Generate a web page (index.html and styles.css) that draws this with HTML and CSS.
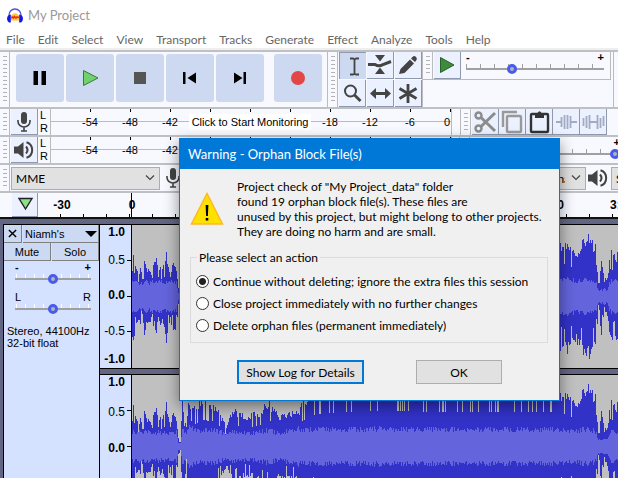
FILE: index.html
```html
<!DOCTYPE html>
<html lang="en">
<head>
<meta charset="utf-8">
<title>My Project</title>
<link rel="stylesheet" href="styles.css">
</head>
<body>
<svg class="defs" aria-hidden="true">
  <symbol id="mic" viewBox="0 0 16 20">
    <rect x="5" y="0" width="6" height="12" rx="3" fill="#444"/>
    <path d="M2 8v1.500a6 5.500 0 0 0 12 0V8M8 15v4M5 19h6" fill="none" stroke="#444" stroke-width="1.600"/>
  </symbol>
  <symbol id="speaker" viewBox="0 0 20 20">
    <path d="M0 6.500h4L9.500 2v16L4 13.500H0z" fill="#444"/>
    <path d="M12 6.500q3 3.500 0 7" fill="none" stroke="#444" stroke-width="2"/>
    <path d="M12.500 2.200a8.200 8.200 0 0 1 0 15.600" fill="none" stroke="#444" stroke-width="2"/>
  </symbol>
</svg>

<div class="app">
  <header class="titlebar">
    <svg class="logo" viewBox="0 0 16 15" aria-hidden="true">
      <path d="M2 9V7a6 6 0 0 1 12 0v2" fill="none" stroke="#5050dc" stroke-width="1.300"/>
      <path d="M4 7.500q4-4.500 8 0v5H4z" fill="#ffc83c"/>
      <path d="M4 10l1.500-1 1 1 1-1.500 1.500 1.500 1-1 2 .5" fill="none" stroke="#f03214" stroke-width="1.600"/>
      <path d="M3.800 6.500v8H2Q0 13 0 10.500T2 7zM12.200 6.500v8H14q2-1.500 2-4T14 7z" fill="#1414e6"/>
    </svg>
    <span>My Project</span>
  </header>
  <nav class="menubar">
    <a href="#">File</a><a href="#">Edit</a><a href="#">Select</a><a href="#">View</a><a href="#">Transport</a><a href="#">Tracks</a><a href="#">Generate</a><a href="#">Effect</a><a href="#">Analyze</a><a href="#">Tools</a><a href="#">Help</a>
  </nav>

  <div class="row row-main">
    <section class="bar transport" aria-label="Transport">
      <i class="grip"></i>
      <div class="big-buttons">
        <button aria-label="Pause"><svg viewBox="0 0 48 48"><path d="M17.500 17h4.500v14h-4.500zM25.500 17H30v14h-4.500z"/></svg></button>
        <button aria-label="Play"><svg viewBox="0 0 48 48"><path d="M17.500 16.500v15L32 24z" fill="#6fd26b" stroke="#3c7a3c"/></svg></button>
        <button aria-label="Stop"><svg viewBox="0 0 48 48"><path d="M18 18h12v12H18z" fill="#555"/></svg></button>
        <button aria-label="Skip to start"><svg viewBox="0 0 48 48"><path d="M17 18h2.500v12H17zM30 18.500v11L21.500 24z"/></svg></button>
        <button aria-label="Skip to end"><svg viewBox="0 0 48 48"><path d="M27.500 18H30v12h-2.500zM18 18.500v11l8.500-5.500z"/></svg></button>
        <button class="record" aria-label="Record"><svg viewBox="0 0 48 48"><circle cx="24" cy="24" r="7" fill="#e34646"/></svg></button>
      </div>
    </section>
    <section class="bar tools" aria-label="Tools">
      <i class="grip"></i>
      <div class="tool-grid">
        <button class="tool pressed" aria-label="Selection"><svg viewBox="0 0 26 26"><path d="M10 5.500h3L14.500 6.500l1.500-1h3M10 21.500h3l1.500-1 1.500 1h3M14.500 6v15" fill="none" stroke="#444" stroke-width="1.800"/></svg></button>
        <button class="tool" aria-label="Envelope"><svg viewBox="0 0 26 26"><path d="M8 3h10l-5 6.500zM13 15.500l5 6.500H8z" fill="#444"/><path d="M1 12.500h7q4 2.500 8 0l8-3" fill="none" stroke="#444" stroke-width="3"/></svg></button>
        <button class="tool" aria-label="Draw"><svg viewBox="0 0 26 26"><path d="M4 22l1.500-5L15 7.500l4 4L9.500 21zM16 6.500l2-2q1.500-1 3 .5t.5 3L20 10z" fill="#444"/></svg></button>
        <button class="tool" aria-label="Zoom"><svg viewBox="0 0 26 26"><circle cx="11.500" cy="11" r="5.500" fill="none" stroke="#444" stroke-width="2"/><path d="M15.500 15l6 6" stroke="#444" stroke-width="2.800"/></svg></button>
        <button class="tool" aria-label="Time shift"><svg viewBox="0 0 26 26"><path d="M3 13.500l6-5.500v4h9V8l6 5.500-6 5.500v-4H9v4z" fill="#444"/></svg></button>
        <button class="tool" aria-label="Multi-tool"><svg viewBox="0 0 26 26"><path d="M13 4v19M4.500 8.500l17 10M4.500 18.500l17-10" stroke="#444" stroke-width="2.800"/></svg></button>
      </div>
    </section>
    <section class="bar speed" aria-label="Play at speed">
      <i class="grip"></i>
      <button class="tool" aria-label="Play at speed"><svg viewBox="0 0 26 26"><path d="M6.500 5.500v15L20 13z" fill="#3c8c3c" stroke="#2d5f2d"/></svg></button>
      <div class="slider speed-slider"><div class="ends"><b>-</b><b>+</b></div><input type="range" aria-label="Speed" min="0" max="100" value="32"></div>
    </section>
    <div class="bar-end"></div>
  </div>

  <div class="row">
    <section class="bar meter-bar" aria-label="Recording meter">
      <i class="grip"></i>
      <button class="tool" aria-label="Record meter"><svg class="mic"><use href="#mic"/></svg></button>
      <div class="lr"><span>L</span><span>R</span></div>
      <div class="meter"><span>-54</span><span>-48</span><span>-42</span><button class="monitor">Click to Start Monitoring</button><span>-18</span><span>-12</span><span>-6</span><span class="zero">0</span></div>
    </section>
    <section class="bar edit" aria-label="Edit">
      <i class="grip"></i>
      <button class="tool" aria-label="Cut"><svg viewBox="0 0 26 26" fill="none" stroke="#8c8c8c" stroke-width="2.400"><circle cx="6.500" cy="6.500" r="3"/><circle cx="6.500" cy="19.500" r="3"/><path d="M9 8.500L23 22M9 17.500L23 4" stroke-width="3"/></svg></button>
      <button class="tool" aria-label="Copy"><svg viewBox="0 0 26 26" fill="none" stroke="#999" stroke-width="2.400"><path d="M4 18V3h14"/><rect x="8" y="7" width="14" height="16" rx="1"/></svg></button>
      <button class="tool" aria-label="Paste"><svg viewBox="0 0 26 26"><rect x="5" y="5" width="17" height="18" rx="1" fill="none" stroke="#333" stroke-width="2.400"/><path d="M9 4h2.500q2-3.500 4 0H18v5H9z" fill="#333"/></svg></button>
      <button class="tool" aria-label="Trim"><svg viewBox="0 0 26 26" fill="none" stroke="#a3aac4"><path d="M3 13h5M18 13h6" stroke-width="2"/><path d="M8.500 8v10M11.500 6v14M14.500 6v14M17.500 7v12" stroke-width="1.800"/></svg></button>
      <button class="tool" aria-label="Silence"><svg viewBox="0 0 26 26" fill="none" stroke="#a3aac4"><path d="M10 13h7" stroke-width="2"/><path d="M3.500 9v8M6.500 7v12M9.500 6v14M17.500 6v14M20.500 9v10M23.500 7v10" stroke-width="1.800"/></svg></button>
    </section>
  </div>

  <div class="row">
    <section class="bar meter-bar" aria-label="Playback meter">
      <i class="grip"></i>
      <button class="tool" aria-label="Playback meter"><svg class="speaker"><use href="#speaker"/></svg></button>
      <div class="lr"><span>L</span><span>R</span></div>
      <div class="meter"><span>-54</span><span>-48</span><span>-42</span></div>
    </section>
    <section class="bar mixer" aria-label="Mixer">
      <i class="grip"></i>
      <div class="slider mixer-slider"><div class="ends"><b>-</b><b>+</b></div><input type="range" aria-label="Playback volume" value="100"></div>
    </section>
  </div>

  <div class="row">
    <section class="bar device" aria-label="Device">
      <i class="grip"></i>
      <select class="host" aria-label="Audio host"><option>MME</option></select>
      <svg class="mic"><use href="#mic"/></svg>
      <select class="rec-device" aria-label="Recording device"><option>Microphone</option></select>
      <select class="channels" aria-label="Recording channels"><option>1 (Mono) Chana</option></select>
      <svg class="speaker"><use href="#speaker"/></svg>
      <select class="play-device" aria-label="Playback device"><option>Speakers</option></select>
    </section>
  </div>

  <div class="timeline">
    <button class="tool pin" aria-label="Pinned play head"><svg viewBox="0 0 26 26"><path d="M7 6.500h13L13.500 17z" fill="#8ce08c" stroke="#222" stroke-width="1.400"/></svg></button>
    <div class="scale"><span>-30</span><span>0</span><span class="far">3:00</span><span>3:30</span></div>
  </div>

  <main class="tracks">
    <article class="track">
      <div class="panel">
        <div class="pair name"><button class="close" aria-label="Close track"><svg viewBox="0 0 10 10"><path d="M1 1l8 8M9 1L1 9" stroke="#000" stroke-width="1.600"/></svg></button><button class="label">Niamh's<i class="caret"></i></button></div>
        <div class="pair"><button>Mute</button><button>Solo</button></div>
        <div class="slider"><div class="ends"><b>-</b><b>+</b></div><input type="range" aria-label="Gain"></div>
        <div class="slider"><div class="ends"><span>L</span><span>R</span></div><input type="range" aria-label="Pan"></div>
        <p>Stereo, 44100Hz<br>32-bit float</p>
      </div>
      <div class="channels-area">
        <div class="channel">
          <div class="vruler"><b>1.0</b><span>0.5</span><b>0.0</b><span>-0.5</span><b>-1.0</b></div>
          <svg class="wave" data-channel="0" role="img" aria-label="Left channel"></svg>
        </div>
        <div class="channel">
          <div class="vruler"><b>1.0</b><span>0.5</span><b>0.0</b><i></i><i></i></div>
          <svg class="wave" data-channel="1" role="img" aria-label="Right channel"></svg>
        </div>
      </div>
    </article>
  </main>
</div>

<div class="dialog" role="dialog" aria-labelledby="dlg-title">
  <h1 id="dlg-title">Warning - Orphan Block File(s)</h1>
  <form class="dialog-body">
    <div class="message">
      <svg viewBox="0 0 34 34" aria-hidden="true"><path d="M17 1.500L32.500 32h-31z" fill="#ffe100" stroke="#fdb827" stroke-width="1.500"/><path d="M15.600 13h2.800l-.5 11h-1.800zM15.700 26h2.600v2.500h-2.600z"/></svg>
      <p>Project check of "My Project_data" folder<br>found 19 orphan block file(s). These files are<br>unused by this project, but might belong to other projects.<br>They are doing no harm and are small.</p>
    </div>
    <fieldset>
      <legend>Please select an action</legend>
      <label><input type="radio" name="action" checked>Continue without deleting; ignore the extra files this session</label>
      <label><input type="radio" name="action">Close project immediately with no further changes</label>
      <label><input type="radio" name="action">Delete orphan files (permanent immediately)</label>
    </fieldset>
    <div class="actions">
      <button type="button" class="default">Show Log for Details</button>
      <button type="button" class="ok">OK</button>
    </div>
  </form>
</div>
<script src="wave.js"></script>
</body>
</html>
```
FILE: styles.css
```css
* { box-sizing: border-box; }
html, body { margin: 0; height: 100%; overflow: hidden; }
body { font: 12px/15px Lato, "Open Sans", sans-serif; color: #000; background: #fff; }
button, select, input { font: inherit; color: inherit; margin: 0; padding: 0; border: 0; border-radius: 0; background: none; }
button svg, .logo { display: block; }
.defs { position: absolute; width: 0; height: 0; }

.app { display: flex; flex-direction: column; height: 100vh; min-width: 0; overflow: hidden; }
.titlebar { display: flex; align-items: center; gap: 5px; height: 30px; padding-left: 7px; color: #999; font-size: 13px; flex: none; }
.logo { width: 16px; height: 15px; }
.menubar { display: flex; gap: 13px; height: 20px; padding: 2px 0 0 6px; border-bottom: 2px solid #efefef; flex: none; }
.menubar a { color: #666; text-decoration: none; }

.row { display: flex; flex: none; height: 28px; background: #f7f9ff; border-top: 2px solid #bfc0c4; overflow: hidden; }
.row-main { height: 57px; }
.bar { display: flex; align-items: flex-start; flex: none; }
.grip { flex: none; align-self: stretch; width: 10px; border-right: 1px solid #bbb;
  background: repeating-linear-gradient(#b4b4b4 0 1px, transparent 1px 4px) 3px 4px / 4px calc(100% - 8px) no-repeat; }
.transport, .tools, .meter-bar { border-right: 1px solid #bbb; }
.transport { width: 328px; }
.big-buttons { display: flex; gap: 2px; padding: 2px 0 0 6px; }
.big-buttons button { width: 48px; height: 48px; border-radius: 3px; background: #ccd9f0; }
.big-buttons .record { margin-left: 8px; }
.tools { width: 95px; }
.tool-grid { display: grid; grid-template-columns: repeat(3, 27px); gap: 1px; padding-left: 1px; }
.tool { flex: none; width: 27px; height: 27px; background: #ebf1ff; border: solid #8e98ae; border-width: 0 1px 1px 0; display: flex; align-items: center; justify-content: center; }
.tool > svg { flex: none; width: 26px; height: 26px; }
.pressed { background: #ccd9f0; border-width: 1px 0 0 1px; }
.speed { height: 28px; width: 188px; border: solid #bbb; border-width: 0 1px 1px 0; }
.speed .tool { margin-left: 1px; }
.bar-end { width: 3px; border-right: 1px solid #bbb; }

.slider { display: flex; flex-direction: column; }
.slider .ends { display: flex; justify-content: space-between; font: 11px/10px "Liberation Sans", sans-serif; }
input[type=range] { appearance: none; width: 100%; height: 12px;
  background: linear-gradient(#a0a0a0, #a0a0a0) 0 6px / 100% 2px no-repeat,
    repeating-linear-gradient(90deg, #a0a0a0 0 1px, transparent 1px 14px) 0 2px / 100% 4px no-repeat; }
input[type=range]::-webkit-slider-thumb { appearance: none; width: 10px; height: 10px; margin-top: 1px; border: 3px solid #4a5aeb; border-radius: 50%; background: #b0b4c0; }
.speed-slider { width: 138px; margin-left: 5px; }
.mixer-slider { width: 146px; margin-left: 4px; }

.row .meter-bar { width: 452px; }
.row:not(.row-main) .tool { height: 26px; }
.row .meter-bar .tool { margin-left: 1px; }
.row .mic, .device > .mic { width: 16px; height: 20px; }
.row .speaker, .device > .speaker { width: 20px; height: 20px; }
.lr { display: flex; flex-direction: column; padding-left: 2px; width: 12px; font: 11px/13px "Liberation Sans", sans-serif; }
.meter { display: grid; grid-template-columns: 40px 40px 40px 120px 40px 40px 40px 20px; align-items: center; justify-items: center; height: 26px; flex: 1; padding-left: 19px; border-left: 1px solid #bbb; font: 11px/16px "Liberation Sans", sans-serif;
  background: linear-gradient(#bbb, #bbb) 0 12px / 100% 1px no-repeat,
    repeating-linear-gradient(90deg, #000 0 1px, transparent 1px 40px) 39px 0 / 100% 3px no-repeat; }
.meter .zero { justify-self: end; }
.monitor { background: #fff; padding: 0 3px; white-space: nowrap; }
.edit { margin-left: 8px; border-left: 1px solid #bbb; }
.edit .grip { margin-right: 1px; }
.mixer { border-left: 1px solid #bbb; margin-left: 7px; }

.device { align-items: center; height: 26px; }
select { appearance: none; height: 23px; border: 1px solid #adadad; padding: 0 20px 0 4px; font-size: 12px;
  background: #e1e1e1 url("data:image/svg+xml,%3Csvg xmlns='http://www.w3.org/2000/svg' width='10' height='6'%3E%3Cpath d='M1 .5l4 4 4-4' fill='none' stroke='%23444' stroke-width='1.2'/%3E%3C/svg%3E") right 4px center no-repeat; }
.host { width: 149px; margin: 0 5px 0 1px; }
.rec-device { width: 300px; margin-left: 10px; }
.channels { width: 90px; margin: 0 2px 0 5px; padding-left: 2px; }
.play-device { width: 150px; margin-left: 3px; }

.timeline { display: flex; flex: none; height: 28px; background: #f7f9ff; border-top: 2px solid #bfc0c4; border-bottom: 2px solid #111; overflow: hidden; }
.pin { margin-left: 12px; height: 24px; width: 26px; }
.scale { display: grid; grid-template-columns: 70px 70px 1fr 70px 70px; flex: 1 0 630px; align-items: center; justify-items: center; margin-left: -11px; font: bold 12px/20px "Liberation Sans", sans-serif;
  background: repeating-linear-gradient(90deg, transparent 0 22px, #000 22px 23px) 11px 100% / 100% 3px no-repeat,
   linear-gradient(#000, #000) 104px 0 / 1px 100% no-repeat; }
.scale .far { grid-column: 4; }

.tracks { flex: 1; min-height: 0; background: #636683; padding: 5px 0 0 3px; overflow: hidden; }
.track { display: flex; border: solid #000; border-width: 1px 0 0 1px; }
.panel { flex: none; width: 96px; height: 300px; background: #d4e1ff; border-right: 1px solid #000; font: 11px/12px "Liberation Sans", sans-serif; }
.pair { display: grid; grid-template-columns: 1fr 1fr; gap: 1px; }
.pair.name { grid-template-columns: 18px 1fr; }
.pair button { height: 18px; background: #ccd9f2; border: solid #808080; border-width: 0 1px 1px 0; }
.pair .close { display: grid; place-items: center; }
.close svg { width: 9px; height: 9px; }
.pair .label { display: flex; align-items: center; justify-content: space-between; padding: 0 1px 0 2px; }
.caret { border: 6px solid transparent; border-top-color: #000; border-bottom: 0; }
.panel .slider { width: 76px; margin-left: 11px; height: 30px; }
.panel .slider .ends { padding-top: 1px; }
.panel .slider input { background: linear-gradient(#a0a0a0, #a0a0a0) 0 6px / 100% 2px no-repeat,
    repeating-linear-gradient(90deg, #fff 0 1px, transparent 1px 9px) 1px 2px / 100% 4px no-repeat; }
.panel p { margin: 4px 0 0 3px; white-space: nowrap; }
.channels-area { flex: 1; min-width: 0; display: flex; flex-direction: column; gap: 5px; }
.channel { display: flex; height: 144px; border: solid #000; border-width: 0 0 1px; }
.channel + .channel { border-top-width: 1px; }
.vruler { flex: none; width: 32px; display: flex; flex-direction: column; align-items: flex-end; padding: 0 6px 2px 0; border-right: 1px solid #000; background: linear-gradient(90deg, transparent 27px, #000 27px) 0 71px / 100% 1px no-repeat, linear-gradient(90deg, transparent 27px, #000 27px) 0 35px / 100% 1px no-repeat, linear-gradient(90deg, transparent 27px, #000 27px) 0 106px / 100% 1px no-repeat, #d4e1ff; font: 12px/14px "Liberation Sans", sans-serif; justify-content: space-between; }
.vruler > * { min-height: 14px; }
.vruler :nth-child(2) { padding-bottom: 6px; }
.vruler :nth-child(4) { padding-top: 8px; }
.wave { display: block; flex: 1; min-width: 0; height: 100%; background: #c0c0c0; }

.dialog { position: absolute; left: 179px; top: 138px; width: 381px; background: #f0f0f0; border: 1px solid #0078d7; box-shadow: 0 5px 14px rgba(0, 0, 0, .45); }
.dialog h1 { margin: 0; padding: 0 8px; font-size: 13px; font-weight: 400; line-height: 30px; color: #fff; background: #0078d7; }
.dialog-body { display: flex; flex-direction: column; padding: 10px 11px 16px 10px; }
.message { display: flex; align-items: center; gap: 13px; }
.message svg { width: 34px; height: 34px; flex: none; }
.message p { margin: 0; white-space: nowrap; }
fieldset { margin: 11px 0 0; padding: 5px 5px 6px; min-width: 0; border: 1px solid #dcdcdc; }
legend { padding: 0 2px; margin-left: 1px; }
label { display: flex; align-items: center; gap: 4px; height: 22px; white-space: nowrap; }
input[type=radio] { appearance: none; flex: none; width: 13px; height: 13px; border: 1px solid #333; border-radius: 50%; background: #fff; }
input[type=radio]:checked { background: radial-gradient(circle, #222 0 3px, #fff 4px); }
.actions { display: flex; gap: 52px; padding: 17px 0 0 47px; }
.actions button { height: 24px; background: #e1e1e1; border: 1px solid #adadad; width: 86px; }
.actions .default { width: 127px; border: 2px solid #0078d7; }
```
FILE: wave.js
```js
// Each point: [x, outer peak, inner RMS]; peaks between points are interpolated.
const intro = [42,38,30,24,28,20,36,28,30,24,18,40,36,22,30,26,32,45,30,22,30,34,30,8,4]
  .map((peak, i) => [i * 2, peak, peak < 10 ? 3 : 14]);
const outro = [[428,50,16],[434,54,17],[444,44,15],[452,56,17],[458,58,17],[463,48,15],[466,14,7],
  [469,38,6],[472,16,7],[475,18,6],[478,45,15],[482,40,15],[488,42,15]];
const peaks = [
  [...intro, [52,45,15], ...outro],
  [...intro, [50,46,18],[54,20,12],[56,46,20],[64,36,16],[68,44,16],[84,40,16],[94,18,12],[101,38,15],
   [114,28,13],[126,34,14],[137,44,16],[146,30,13],[166,35,18],[172,44,17],[186,54,17],[240,58,17],[420,56,17], ...outro]
];
const noise = n => { const v = Math.sin(n * 127.1 + 311.7) * 43758.5453; return v - Math.floor(v); };
function at(points, x) {
  let i = 1;
  while (i < points.length - 1 && points[i][0] < x) i++;
  const a = points[i - 1], b = points[i], t = Math.min(1, Math.max(0, (x - a[0]) / (b[0] - a[0])));
  return [a[1] + (b[1] - a[1]) * t, a[2] + (b[2] - a[2]) * t];
}
document.querySelectorAll(".wave").forEach(svg => {
  const c = Number(svg.dataset.channel), width = svg.clientWidth, mid = 71;
  let outer = "", inner = "";
  for (let x = 0; x < width; x++) {
    const [peak, rms] = at(peaks[c], x);
    const drop = k => noise(x + k) > 0.86 ? 0.6 : 0.84 + noise(x * 3 + k) * 0.24;
    const up = Math.round(peak * drop(7)), down = Math.round(peak * drop(91));
    const r = Math.round(Math.min(up, down, rms * (0.8 + noise(x * 5 + c) * 0.35)));
    outer += `M${x} ${mid - up}h1v${up + down + 1}h-1z`;
    inner += `M${x} ${mid - r}h1v${r * 2 + 1}h-1z`;
  }
  svg.innerHTML = `<g shape-rendering="crispEdges"><path d="${outer}" fill="#3232c8"/><path d="${inner}" fill="#6464dc"/></g>`;
});
```
